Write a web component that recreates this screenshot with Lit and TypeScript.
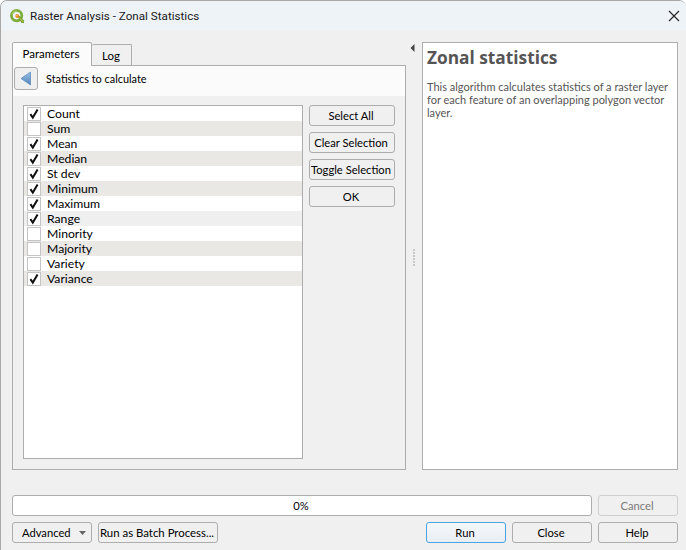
import { LitElement, html, css, svg } from 'lit';
import { customElement, state } from 'lit/decorators.js';
import { classMap } from 'lit/directives/class-map.js';

const STATS: [string, boolean][] = [
    ['Count', true],
    ['Sum', false],
    ['Mean', true],
    ['Median', true],
    ['St dev', true],
    ['Minimum', true],
    ['Maximum', true],
    ['Range', true],
    ['Minority', false],
    ['Majority', false],
    ['Variety', false],
    ['Variance', true],
];

const qgisLogo = svg`
    <svg class="logo" width="16" height="16" viewBox="0 0 16 16">
        <circle cx="7.6" cy="7.6" r="5.2" fill="none" stroke="#7dae3c" stroke-width="2.8"/>
        <path d="M7.8 3a4.7 4.7 0 0 0-4.6 3.6" fill="none" stroke="#a6c65a" stroke-width="1.4"/>
        <path d="M8.4 8.6 L10.4 7.8 L15 12.6 V15 H12.6 Z" fill="#6f9f30"/>
        <path d="M10 9.6 L14.4 14" stroke="#d8d24a" stroke-width="1"/>
        <circle cx="8.2" cy="8" r="1.9" fill="#ee8a2c"/>
        <circle cx="7.8" cy="7.5" r="0.8" fill="#f7c64a"/>
    </svg>`;

@customElement('app-root')
export class AppRoot extends LitElement {
    static styles = css`
        :host {
            display: block;
            width: 686px;
            height: 550px;
            font-family: Lato, 'Open Sans', sans-serif;
            font-size: 11.2px;
            color: #000;
        }

        .window {
            box-sizing: border-box;
            width: 686px;
            height: 550px;
            display: flex;
            flex-direction: column;
            background: #f0f0f0;
            border: 1px solid #a8a8a8;
            border-bottom: 0;
            border-right: 0;
            border-top-left-radius: 7px;
            border-top-right-radius: 7px;
            overflow: hidden;
        }

        .titlebar {
            height: 30px;
            flex: none;
            display: flex;
            align-items: center;
            padding: 0 6px 0 8px;
            background: #eef3f8;
            font-family: Roboto, sans-serif;
            font-size: 11.65px;
            color: #1a1a1a;
        }
        .logo { margin-right: 5px; flex: none; }
        .title { flex: 1; }
        .close { display: block; }

        .content {
            flex: 1;
            display: flex;
            padding: 11px 8px 0 11px;
        }

        .left { width: 394px; display: flex; flex-direction: column; height: 428px; }

        .tabs { display: flex; height: 23px; align-items: flex-end; position: relative; z-index: 1; font-size: 11.5px; }
        .tab {
            box-sizing: border-box;
            border: 1px solid #adadad;
            border-bottom: 0;
            border-radius: 2px 2px 0 0;
            display: flex;
            align-items: center;
            justify-content: center;
        }
        .tab.active {
            width: 80px;
            height: 24px;
            margin-bottom: -1px;
            background: #fbfbfb;
            padding: 0 2px 2px 0;
        }
        .tab.idle {
            width: 40px;
            height: 21px;
            border-left: 0;
            background: #f0f0f0;
            padding-right: 1px;
        }

        .panel {
            flex: 1;
            box-sizing: border-box;
            border: 1px solid #adadad;
            display: flex;
            flex-direction: column;
            background: #f0f0f0;
        }

        .panel-head {
            height: 30px;
            flex: none;
            box-sizing: border-box;
            display: flex;
            align-items: flex-start;
            padding: 1px 0 0 1px;
            background: #fbfbfb;
        }
        .back {
            box-sizing: border-box;
            width: 24px;
            height: 23px;
            border: 1px solid #adadad;
            border-radius: 3px;
            background: #efefef;
            display: flex;
            align-items: center;
            justify-content: center;
        }
        .panel-head span { margin-left: 8px; line-height: 23px; font-size: 10.9px; }

        .body {
            flex: 1;
            display: flex;
            gap: 6px;
            padding: 9px 10px 10px 10px;
        }

        .list {
            box-sizing: border-box;
            width: 280px;
            border: 1px solid #adadad;
            background: #fff;
            font-size: 12.2px;
        }
        .row {
            height: 15px;
            display: flex;
            align-items: center;
            padding-left: 3px;
            line-height: 15px;
        }
        .row:nth-child(even) { background: #e9e8e5; }
        .row:nth-child(8) { background: #efefef; }
        .check {
            box-sizing: border-box;
            width: 14px;
            height: 14px;
            margin-right: 6px;
            background: #fff;
            border: 1px solid #c4c4c4;
            display: flex;
            align-items: center;
            justify-content: center;
        }

        .side { display: flex; flex-direction: column; gap: 6px; }

        button {
            box-sizing: border-box;
            height: 21px;
            padding: 0 2px 0 0;
            font: inherit;
            color: #000;
            background: #f0f0f0;
            border: 1px solid #adadad;
            border-radius: 3px;
            white-space: nowrap;
        }
        .side button { width: 86px; }

        .splitter {
            width: 16px;
            flex: none;
            display: flex;
            flex-direction: column;
            align-items: center;
        }
        .arrow { margin-top: 2px; margin-left: -4px; }
        .dots {
            margin-top: 197px;
            display: flex;
            flex-direction: column;
            gap: 1px;
        }
        .dots i { width: 2px; height: 2px; background: #c8c8c8; }

        .help {
            flex: 1;
            height: 428px;
            box-sizing: border-box;
            border: 1px solid #adadad;
            background: #fff;
            padding: 3px 4px;
            overflow: hidden;
        }
        .help h2 {
            margin: 0;
            font-family: 'Open Sans', sans-serif;
            font-size: 17.3px;
            line-height: 24px;
            font-weight: 700;
            color: #555;
        }
        .help p {
            margin: 10px 0 0;
            line-height: 13px;
            font-size: 11px;
            color: #555;
        }

        .footer {
            flex: none;
            display: flex;
            flex-direction: column;
            gap: 6px;
            padding: 0 8px 7px 11px;
        }
        .progress-row { display: flex; gap: 6px; }
        .progress {
            box-sizing: border-box;
            flex: 1;
            height: 21px;
            border: 1px solid #adadad;
            border-radius: 3px;
            background: #fff;
            display: flex;
            align-items: center;
            justify-content: center;
            padding-right: 2px;
        }
        .cancel { width: 80px; color: #7a7a7a; border-color: #cfcfcf; }

        .actions { display: flex; gap: 6px; }
        .advanced {
            width: 80px;
            display: flex;
            align-items: center;
            padding: 0 5px 0 9px;
            justify-content: space-between;
        }
        .batch { width: 120px; font-size: 11.4px; }
        .spacer { flex: 1; }
        .act { width: 80px; }
        .run {
            border-color: #4aa3e0;
            background: linear-gradient(#f4f8fb, #e9eef3);
        }
    `;

    @state() stats = STATS;

    private renderRow([name, on]: [string, boolean]) {
        return html`
            <div class="row">
                <span class="check">
                    ${on
                        ? html`<svg width="12" height="12" viewBox="0 0 12 12"><path d="M2.4 6.2 L4.8 9.6 L9.6 1.4" fill="none" stroke="#111" stroke-width="2"/></svg>`
                        : ''}
                </span>
                ${name}
            </div>
        `;
    }

    render() {
        return html`
            <div class="window">
                <div class="titlebar">
                    ${qgisLogo}
                    <span class="title">Raster Analysis - Zonal Statistics</span>
                    <svg class="close" width="12" height="12" viewBox="0 0 12 12">
                        <path d="M1 1 L11 11 M11 1 L1 11" stroke="#222" stroke-width="1.1"/>
                    </svg>
                </div>
                <div class="content">
                    <div class="left">
                        <div class="tabs">
                            <div class=${classMap({ tab: true, active: true })}>Parameters</div>
                            <div class=${classMap({ tab: true, idle: true })}>Log</div>
                        </div>
                        <div class="panel">
                            <div class="panel-head">
                                <div class="back">
                                    <svg width="12" height="15" viewBox="0 0 12 15">
                                        <defs>
                                            <linearGradient id="arrowFill" x1="0" y1="0" x2="0" y2="1">
                                                <stop offset="0" stop-color="#9cc0e4"/>
                                                <stop offset="1" stop-color="#4f82b8"/>
                                            </linearGradient>
                                        </defs>
                                        <path d="M10.5 1 V14 L1 7.5 Z" fill="url(#arrowFill)" stroke="#5f8fc0" stroke-width="0.8"/>
                                    </svg>
                                </div>
                                <span>Statistics to calculate</span>
                            </div>
                            <div class="body">
                                <div class="list">${this.stats.map((s) => this.renderRow(s))}</div>
                                <div class="side">
                                    <button>Select All</button>
                                    <button>Clear Selection</button>
                                    <button>Toggle Selection</button>
                                    <button>OK</button>
                                </div>
                            </div>
                        </div>
                    </div>
                    <div class="splitter">
                        <svg class="arrow" width="5" height="8" viewBox="0 0 5 8"><path d="M4.5 0 V8 L0.5 4 Z" fill="#444"/></svg>
                        <div class="dots">${[0, 1, 2, 3, 4, 5].map(() => html`<i></i>`)}</div>
                    </div>
                    <div class="help">
                        <h2>Zonal statistics</h2>
                        <p>This algorithm calculates statistics of a raster layer for each feature of an overlapping polygon vector layer.</p>
                    </div>
                </div>
                <div class="footer">
                    <div class="progress-row">
                        <div class="progress">0%</div>
                        <button class="cancel">Cancel</button>
                    </div>
                    <div class="actions">
                        <button class="advanced">
                            <span>Advanced</span>
                            <svg width="7" height="4" viewBox="0 0 7 4"><path d="M0 0 H7 L3.5 4 Z" fill="#666"/></svg>
                        </button>
                        <button class="batch">Run as Batch Process...</button>
                        <div class="spacer"></div>
                        <button class="act run">Run</button>
                        <button class="act">Close</button>
                        <button class="act">Help</button>
                    </div>
                </div>
            </div>
        `;
    }
}
